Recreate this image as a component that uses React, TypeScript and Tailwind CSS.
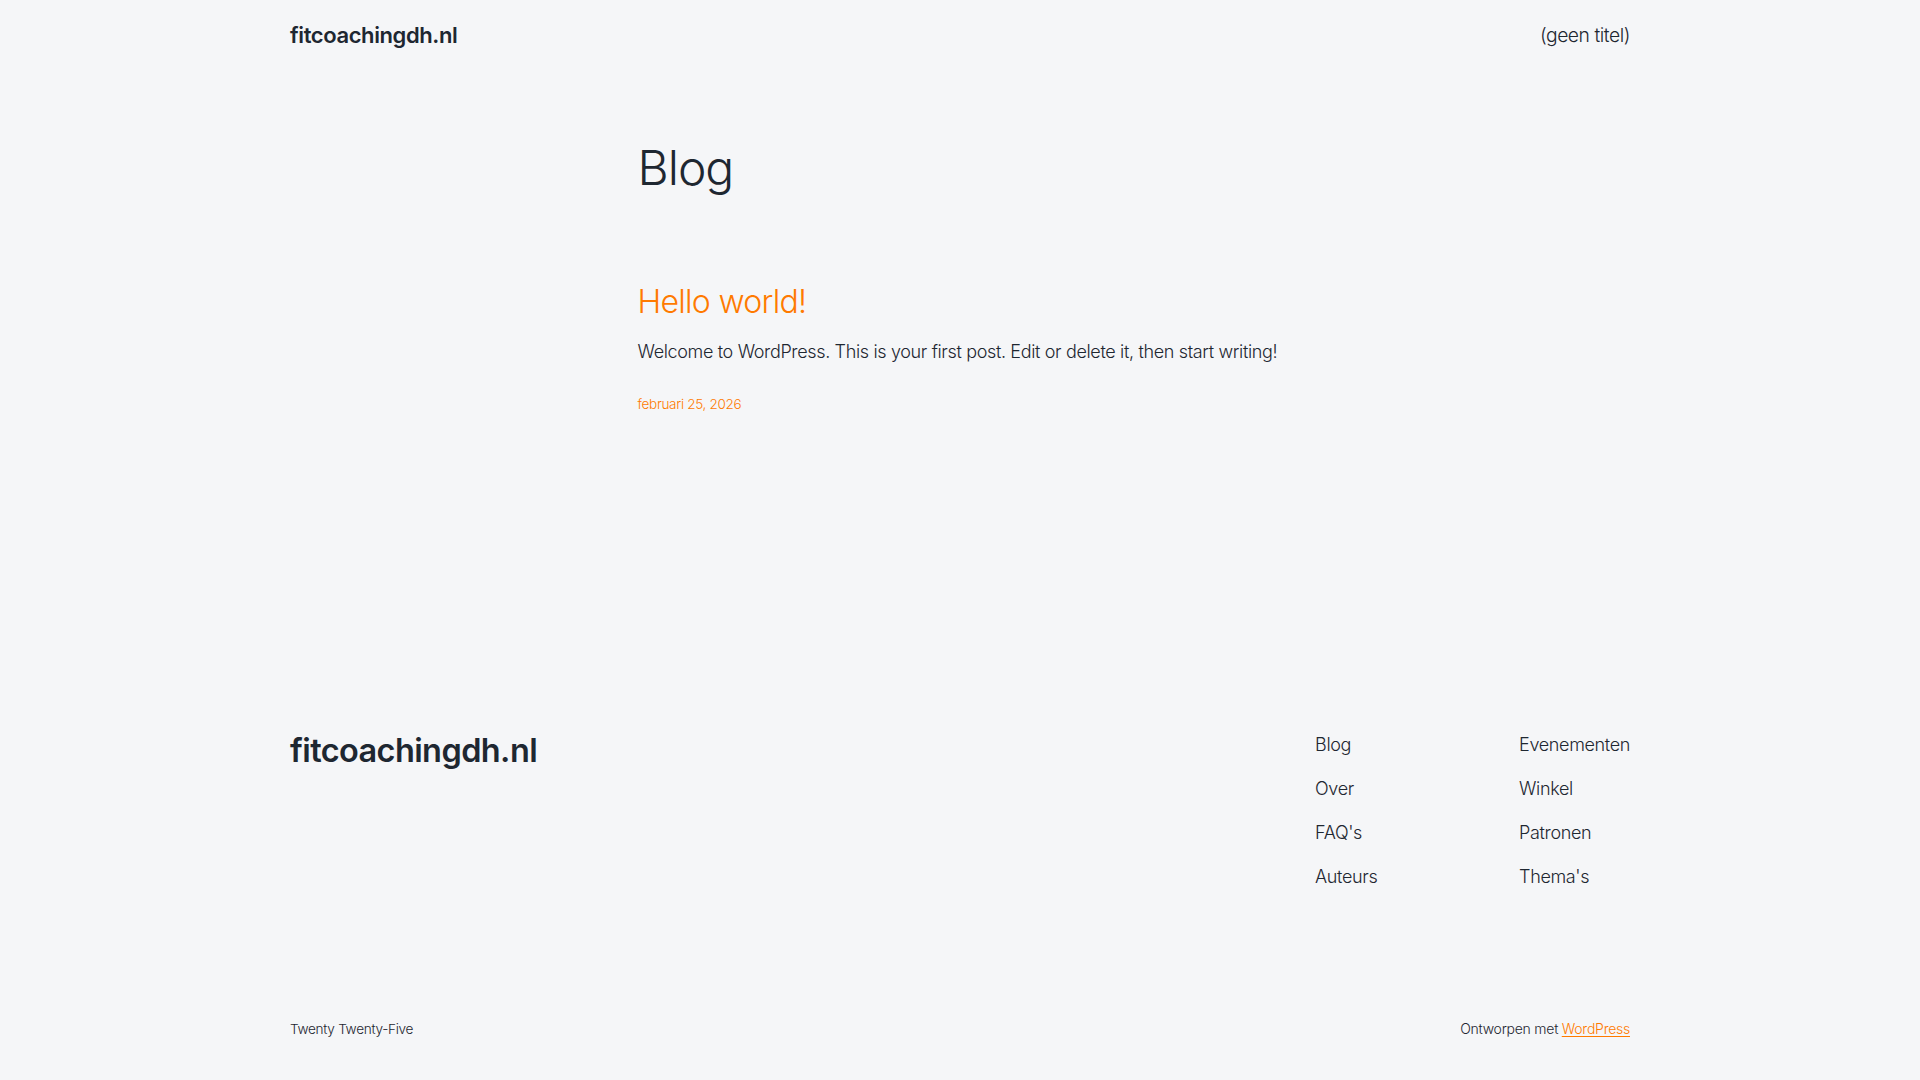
const FOOTER_LINKS: string[][] = [
  ["Blog", "Over", "FAQ's", "Auteurs"],
  ["Evenementen", "Winkel", "Patronen", "Thema's"],
];

export default function App() {
  return (
    <div
      className="min-h-screen flex flex-col bg-[#f5f6f8] text-[#1e2731]"
      style={{ fontFamily: "Inter, 'Noto Sans', sans-serif" }}
    >
      <header className="w-[1340px] mx-auto h-[69px] pt-[1px] flex items-center justify-between">
        <a className="text-[22px] font-semibold tracking-[-0.4px]">fitcoachingdh.nl</a>
        <nav>
          <a className="text-[19.3px] font-light tracking-[-0.45px]">(geen titel)</a>
        </nav>
      </header>

      <main className="flex-1">
        <div className="w-[645px] mx-auto pt-[70px]">
          <h1 className="text-[48px] leading-[1.2] font-light tracking-[-1px]">Blog</h1>
          <article className="mt-[86px]">
            <h2 className="text-[32px] leading-[1.2] font-light text-[#ff7a00] tracking-[-0.7px]">
              Hello world!
            </h2>
            <p className="mt-[17px] text-[18px] leading-[1.6] font-light tracking-[-0.35px]">
              Welcome to WordPress. This is your first post. Edit or delete it, then start writing!
            </p>
            <p className="mt-[28px] text-[13.5px] leading-[1.4] font-light text-[#ff7a00] tracking-[-0.3px]">
              februari 25, 2026
            </p>
          </article>
        </div>
      </main>

      <footer className="w-[1340px] mx-auto pb-[39px]">
        <div className="flex items-start justify-between">
          <a className="text-[32.5px] leading-[1.2] font-semibold tracking-[-0.6px] mt-[1px]">
            fitcoachingdh.nl
          </a>
          <div className="flex">
            {FOOTER_LINKS.map((col, i) => (
              <ul key={i} className={i === 0 ? "w-[204px] flex flex-col gap-[14px]" : "flex flex-col gap-[14px]"}>
                {col.map((l) => (
                  <li key={l} className="text-[18px] leading-[30px] font-light tracking-[-0.35px]">
                    {l}
                  </li>
                ))}
              </ul>
            ))}
          </div>
        </div>
        <div className="mt-[125px] flex items-center justify-between text-[13.6px] leading-[24px] font-light tracking-[-0.3px]">
          <span>Twenty Twenty-Five</span>
          <span className="text-[14px] tracking-[-0.25px]">
            Ontworpen met{" "}
            <a className="text-[#ff7a00] underline underline-offset-2">WordPress</a>
          </span>
        </div>
      </footer>
    </div>
  );
}
